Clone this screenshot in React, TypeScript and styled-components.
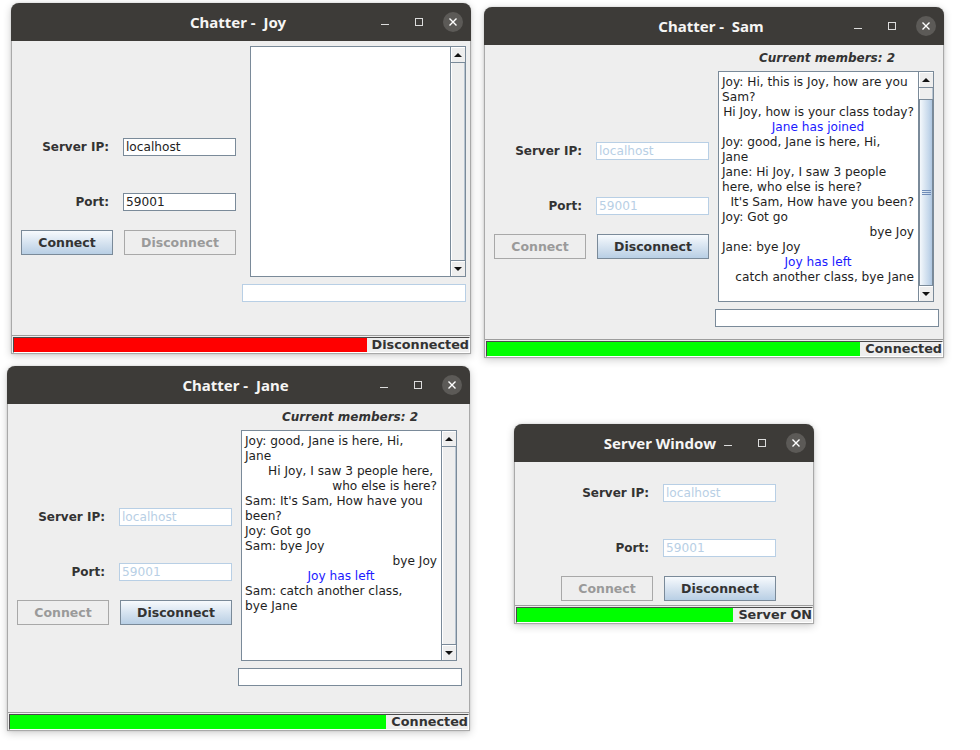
import styled, { createGlobalStyle } from "styled-components";

type Align = "left" | "right" | "center";

interface ChatLine {
  text: string;
  align?: Align;
  notice?: boolean;
}

const samLines: ChatLine[] = [
  { text: "Joy: Hi, this is Joy, how are you" },
  { text: "Sam?" },
  { text: "Hi Joy, how is your class today?", align: "right" },
  { text: "Jane has joined", align: "center", notice: true },
  { text: "Joy: good, Jane is here, Hi," },
  { text: "Jane" },
  { text: "Jane: Hi Joy, I saw 3 people" },
  { text: "here, who else is here?" },
  { text: "It's Sam, How have you been?", align: "right" },
  { text: "Joy: Got go" },
  { text: "bye Joy", align: "right" },
  { text: "Jane: bye Joy" },
  { text: "Joy has left", align: "center", notice: true },
  { text: "catch another class, bye Jane", align: "right" },
];

const janeLines: ChatLine[] = [
  { text: "Joy: good, Jane is here, Hi," },
  { text: "Jane" },
  { text: "Hi Joy, I saw 3 people here, ", align: "right" },
  { text: "who else is here?", align: "right" },
  { text: "Sam: It's Sam, How have you" },
  { text: "been?" },
  { text: "Joy: Got go" },
  { text: "Sam: bye Joy" },
  { text: "bye Joy", align: "right" },
  { text: "Joy has left", align: "center", notice: true },
  { text: "Sam: catch another class," },
  { text: "bye Jane" },
];

const GlobalStyle = createGlobalStyle`
  *, *::before, *::after { box-sizing: border-box; }
  html, body {
    margin: 0;
    padding: 0;
    background: #ffffff;
  }
  body {
    font-family: "DejaVu Sans", "Liberation Sans", sans-serif;
    font-size: 12px;
  }
`;

const Desktop = styled.div`
  position: relative;
  width: 980px;
  height: 750px;
  overflow: hidden;
  background: #ffffff;
`;

const Frame = styled.div<{ $x: number; $y: number; $w: number }>`
  position: absolute;
  left: ${(p) => p.$x}px;
  top: ${(p) => p.$y}px;
  width: ${(p) => p.$w}px;
  display: flex;
  flex-direction: column;
  background: #eeeeee;
  border: 1px solid #a9a9a9;
  border-top: none;
  border-radius: 8px 8px 0 0;
  box-shadow: 0 2px 9px rgba(0, 0, 0, 0.2), 0 0 2px rgba(0, 0, 0, 0.15);
`;

const TitleBar = styled.div`
  height: 38px;
  margin: 0 -1px;
  display: flex;
  align-items: center;
  background: #3d3b38;
  border-radius: 8px 8px 0 0;
  color: #f6f5f4;

  &::before {
    content: "";
    flex: 1 1 0;
  }
`;

const TitleText = styled.div`
  flex: none;
  font-family: "Noto Sans", "DejaVu Sans", sans-serif;
  font-weight: 700;
  font-size: 15px;
  white-space: pre;
`;

const Controls = styled.div`
  flex: 1 1 0;
  display: flex;
  justify-content: flex-end;
  gap: 10px;
  padding-right: 6px;
`;

const Control = styled.div`
  width: 24px;
  height: 24px;
  display: flex;
  align-items: center;
  justify-content: center;
`;

const CloseDot = styled.div`
  width: 20px;
  height: 20px;
  border-radius: 50%;
  background: #5c5a57;
  display: flex;
  align-items: center;
  justify-content: center;
`;

const Body = styled.div<{ $h: number }>`
  height: ${(p) => p.$h}px;
  display: flex;
`;

const FormColumn = styled.div<{ $w?: number; $inset: number }>`
  ${(p) => (p.$w ? `width: ${p.$w}px;` : "flex: 1;")}
  padding: 17px 0 0 ${(p) => p.$inset}px;
  display: flex;
  flex-direction: column;
  justify-content: center;
`;

const FormRow = styled.div<{ $top?: number }>`
  display: grid;
  grid-template-columns: 92px 113px;
  column-gap: 10px;
  align-items: center;
  margin-top: ${(p) => p.$top ?? 0}px;
`;

const Label = styled.div`
  text-align: right;
  padding-right: 4px;
  font-weight: 700;
  color: #333333;
  white-space: nowrap;
`;

const Field = styled.div<{ $disabled?: boolean }>`
  height: 18px;
  padding: 0 2px;
  background: #ffffff;
  border: 1px solid ${(p) => (p.$disabled ? "#b8cfe5" : "#7a8a99")};
  color: ${(p) => (p.$disabled ? "#b8cfe5" : "#222222")};
  font-size: 12.15px;
  line-height: 16px;
  white-space: nowrap;
`;

const Button = styled.div<{ $disabled?: boolean; $w: number }>`
  width: ${(p) => p.$w}px;
  justify-self: end;
  height: 25px;
  display: flex;
  align-items: center;
  justify-content: center;
  font-size: 12.5px;
  font-weight: 700;
  color: ${(p) => (p.$disabled ? "#9a9a9a" : "#333333")};
  border: 1px solid ${(p) => (p.$disabled ? "#a8a8a8" : "#7a8a99")};
  background: ${(p) =>
    p.$disabled
      ? "#eeeeee"
      : "linear-gradient(to bottom, #f7fafd 0%, #dde8f3 40%, #c8d9ea 75%, #b8cfe5 100%)"};
`;

const ChatColumn = styled.div`
  width: 224px;
  padding-top: 5px;
  display: flex;
  flex-direction: column;
`;

const Members = styled.div`
  height: 16px;
  line-height: 16px;
  margin-bottom: 5px;
  text-align: center;
  font-weight: 700;
  font-style: italic;
  color: #333333;
`;

const ChatBox = styled.div<{ $offset: number }>`
  margin-left: ${(p) => p.$offset}px;
  width: 216px;
  height: 231px;
  display: flex;
  border: 1px solid #7a8a99;
  background: #ffffff;
`;

const TextPane = styled.div`
  flex: 1;
  padding: 3px 4px 0 3px;
  font-size: 12.15px;
  line-height: 15px;
  color: #1e1e1e;
  overflow: hidden;
`;

const Line = styled.div<{ $align: Align; $notice?: boolean }>`
  text-align: ${(p) => p.$align};
  color: ${(p) => (p.$notice ? "#1a1aff" : "inherit")};
  white-space: pre;
`;

const ScrollBar = styled.div`
  width: 15px;
  display: flex;
  flex-direction: column;
  border-left: 1px solid #7a8a99;
  background: #eeeeee;
`;

const ScrollButton = styled.div<{ $down?: boolean }>`
  height: 16px;
  display: flex;
  align-items: center;
  justify-content: center;
  background: #eeeeee;
  box-shadow: inset 1px 1px 0 #ffffff;
  ${(p) => (p.$down ? "border-top" : "border-bottom")}: 1px solid #7a8a99;

  &::after {
    content: "";
    width: 0;
    height: 0;
    border-left: 4px solid transparent;
    border-right: 4px solid transparent;
    ${(p) => (p.$down ? "border-top" : "border-bottom")}: 4px solid #111111;
  }
`;

const Track = styled.div<{ $offset: number }>`
  flex: 1;
  display: flex;
  flex-direction: column;
  padding-top: ${(p) => p.$offset}px;
  box-shadow: inset 1px 0 0 #ffffff, inset -1px 0 0 #b8c4d0;
`;

const Thumb = styled.div`
  flex: 1;
  display: flex;
  align-items: center;
  justify-content: center;
  border: 1px solid #7a8a99;
  border-bottom: none;
  background: linear-gradient(to right, #f4f8fc 0%, #dde8f3 35%, #c3d6ea 75%, #aec6e0 100%);
`;

const Grip = styled.div`
  width: 9px;
  height: 5px;
  background: repeating-linear-gradient(to bottom, #6f8cb8 0 1px, transparent 1px 2px);
`;

const MessageInput = styled.div<{ $disabled?: boolean }>`
  margin-top: 7px;
  height: 18px;
  background: #ffffff;
  border: 1px solid ${(p) => (p.$disabled ? "#b8cfe5" : "#7a8a99")};
`;

const StatusBar = styled.div`
  height: 18px;
  padding: 1px 0 0 1px;
  border-top: 1px solid #9d9d9d;
  display: flex;
`;

const StatusInner = styled.div`
  flex: 1;
  display: flex;
  align-items: stretch;
  border: 1px solid;
  border-color: #4a4a4a #ffffff #ffffff #4a4a4a;
`;

const StatusFill = styled.div<{ $color: string }>`
  flex: 1;
  background: ${(p) => p.$color};
`;

const StatusText = styled.div`
  padding: 0 0 0 5px;
  font-size: 12.8px;
  font-weight: 700;
  color: #333333;
  line-height: 13px;
  white-space: nowrap;
  background: #eeeeee;
`;

function WindowControls() {
  return (
    <Controls>
      <Control>
        <svg width="10" height="10" viewBox="0 0 10 10">
          <line x1="1" y1="7.5" x2="9" y2="7.5" stroke="#dcdcdc" strokeWidth="1" />
        </svg>
      </Control>
      <Control>
        <svg width="10" height="10" viewBox="0 0 10 10">
          <rect x="1.5" y="1.5" width="7" height="7" fill="none" stroke="#dcdcdc" strokeWidth="1" />
        </svg>
      </Control>
      <Control>
        <CloseDot>
          <svg width="10" height="10" viewBox="0 0 10 10">
            <path d="M1.5 1.5 L8.5 8.5 M8.5 1.5 L1.5 8.5" stroke="#ffffff" strokeWidth="1.4" />
          </svg>
        </CloseDot>
      </Control>
    </Controls>
  );
}

function ConnectionForm({ connected }: { connected: boolean }) {
  return (
    <>
      <FormRow>
        <Label>Server IP:</Label>
        <Field $disabled={connected}>localhost</Field>
      </FormRow>
      <FormRow $top={37}>
        <Label>Port:</Label>
        <Field $disabled={connected}>59001</Field>
      </FormRow>
      <FormRow $top={19}>
        <Button $w={92} $disabled={connected}>Connect</Button>
        <Button $w={112} $disabled={!connected}>Disconnect</Button>
      </FormRow>
    </>
  );
}

function Status({ connected, text }: { connected: boolean; text: string }) {
  return (
    <StatusBar>
      <StatusInner>
        <StatusFill $color={connected ? "#00ff00" : "#ff0000"} />
        <StatusText>{text}</StatusText>
      </StatusInner>
    </StatusBar>
  );
}

interface ChatterProps {
  x: number;
  y: number;
  w: number;
  bodyH: number;
  user: string;
  members?: number;
  connected: boolean;
  chatOffset: number;
  lines: ChatLine[];
  thumbOffset?: number;
}

function ChatterWindow(props: ChatterProps) {
  const { x, y, w, bodyH, user, members, connected, chatOffset, lines, thumbOffset } = props;
  return (
    <Frame $x={x} $y={y} $w={w}>
      <TitleBar>
        <TitleText>{`Chatter -  ${user}`}</TitleText>
        <WindowControls />
      </TitleBar>
      <Body $h={bodyH}>
        <FormColumn $w={230} $inset={9}>
          <ConnectionForm connected={connected} />
        </FormColumn>
        <ChatColumn>
          {members !== undefined && <Members>Current members: {members}</Members>}
          <ChatBox $offset={chatOffset}>
            <TextPane>
              {lines.map((l, i) => (
                <Line key={i} $align={l.align ?? "left"} $notice={l.notice}>
                  {l.text}
                </Line>
              ))}
            </TextPane>
            <ScrollBar>
              <ScrollButton />
              <Track $offset={thumbOffset ?? 0}>
                {thumbOffset !== undefined && (
                  <Thumb>
                    <Grip />
                  </Thumb>
                )}
              </Track>
              <ScrollButton $down />
            </ScrollBar>
          </ChatBox>
          <MessageInput $disabled={!connected} />
        </ChatColumn>
      </Body>
      <Status connected={connected} text={connected ? "Connected" : "Disconnected"} />
    </Frame>
  );
}

function ServerWindow() {
  return (
    <Frame $x={514} $y={424} $w={300}>
      <TitleBar>
        <TitleText>Server Window</TitleText>
        <WindowControls />
      </TitleBar>
      <Body $h={143}>
        <FormColumn $inset={46}>
          <ConnectionForm connected />
        </FormColumn>
      </Body>
      <Status connected text="Server ON" />
    </Frame>
  );
}

export default function App() {
  return (
    <>
      <GlobalStyle />
      <Desktop>
        <ChatterWindow
          x={11}
          y={3}
          w={460}
          bodyH={294}
          user="Joy"
          connected={false}
          chatOffset={8}
          lines={[]}
        />
        <ChatterWindow
          x={484}
          y={7}
          w={460}
          bodyH={294}
          user="Sam"
          members={2}
          connected
          chatOffset={3}
          lines={samLines}
          thumbOffset={11}
        />
        <ChatterWindow
          x={7}
          y={366}
          w={463}
          bodyH={308}
          user="Jane"
          members={2}
          connected
          chatOffset={3}
          lines={janeLines}
        />
        <ServerWindow />
      </Desktop>
    </>
  );
}
